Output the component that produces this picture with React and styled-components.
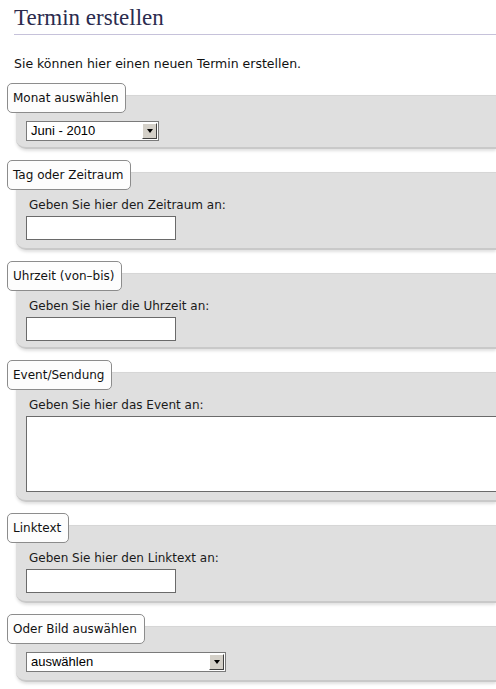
import React from "react";
import styled, { createGlobalStyle } from "styled-components";

const GlobalStyle = createGlobalStyle`
  html, body {
    margin: 0;
    padding: 0;
    background: #fff;
    overflow: hidden;
  }
  body {
    font-family: "DejaVu Sans", Verdana, sans-serif;
    font-size: 12px;
    color: #111;
  }
`;

const Page = styled.div`
  padding: 4px 0 0 7px;
`;

const Title = styled.h1`
  margin: 0 0 0 7px;
  padding: 2px 0 4px;
  font-family: "Liberation Serif", "Times New Roman", serif;
  font-weight: normal;
  font-size: 23px;
  line-height: 24px;
  color: #2b2b4e;
  border-bottom: 1px solid #c6c2da;
`;

const Intro = styled.p`
  margin: 21px 0 12px 7px;
  font-size: 12.5px;
  line-height: 15px;
`;

const Section = styled.section`
  display: flex;
  flex-direction: column;
  align-items: flex-start;
  margin-bottom: 11px;
`;

const Legend = styled.div`
  position: relative;
  z-index: 1;
  height: 28px;
  line-height: 28px;
  padding: 0 7px 0 5px;
  background: #fdfdfd;
  border: 1px solid #8c8c8c;
  border-radius: 5px;
  margin-bottom: -18px;
`;

const Panel = styled.div`
  align-self: stretch;
  overflow: hidden;
  margin-left: 9px;
  padding: 25px 0 ${(p) => (p.$tight ? 6 : 8)}px 10px;
  background: #dfdfdf;
  border-top: 1px solid #d6d6d6;
  border-bottom: 2px solid #c9c9c9;
  border-bottom-left-radius: 10px;
  box-shadow: 0 2px 3px rgba(0, 0, 0, 0.12);
`;

const Label = styled.div`
  padding-left: 3px;
  line-height: 15px;
  margin-bottom: 3px;
  color: #1a1a1a;
`;

const TextBox = styled.div`
  width: ${(p) => (p.$wide ? "calc(100% + 30px)" : "148px")};
  height: ${(p) => p.$height || 22}px;
  background: #fff;
  border: 1px solid #6a6a6a;
`;

const SelectBox = styled.div`
  display: flex;
  align-items: stretch;
  width: ${(p) => p.$width}px;
  height: 18px;
  background: #fff;
  border: 1px solid #7a7a7a;
  font-family: "Liberation Sans", Arial, sans-serif;
  font-size: 13px;
`;

const SelectValue = styled.span`
  flex: 1;
  padding-left: 4px;
  line-height: 18px;
  color: #000;
`;

const ArrowButton = styled.span`
  width: 15px;
  margin: 1px;
  background: #d4d0c8;
  border-top: 1px solid #fff;
  border-left: 1px solid #fff;
  border-right: 1px solid #404040;
  border-bottom: 1px solid #404040;
  box-sizing: border-box;
  display: flex;
  align-items: center;
  justify-content: center;

  &::after {
    content: "";
    border-left: 3.5px solid transparent;
    border-right: 3.5px solid transparent;
    border-top: 4px solid #000;
  }
`;

const Select = ({ value, width }) => (
  <SelectBox $width={width}>
    <SelectValue>{value}</SelectValue>
    <ArrowButton />
  </SelectBox>
);

const Fieldset = ({ legend, tight, children }) => (
  <Section>
    <Legend>{legend}</Legend>
    <Panel $tight={tight}>{children}</Panel>
  </Section>
);

export default function App() {
  return (
    <>
      <GlobalStyle />
      <Page>
        <Title>Termin erstellen</Title>
        <Intro>Sie können hier einen neuen Termin erstellen.</Intro>

        <Fieldset legend="Monat auswählen" tight>
          <Select value="Juni - 2010" width={131} />
        </Fieldset>

        <Fieldset legend="Tag oder Zeitraum">
          <Label>Geben Sie hier den Zeitraum an:</Label>
          <TextBox />
        </Fieldset>

        <Fieldset legend="Uhrzeit (von–bis)" tight>
          <Label>Geben Sie hier die Uhrzeit an:</Label>
          <TextBox />
        </Fieldset>

        <Fieldset legend="Event/Sendung">
          <Label>Geben Sie hier das Event an:</Label>
          <TextBox $wide $height={74} />
        </Fieldset>

        <Fieldset legend="Linktext">
          <Label>Geben Sie hier den Linktext an:</Label>
          <TextBox />
        </Fieldset>

        <Fieldset legend="Oder Bild auswählen">
          <Select value="auswählen" width={198} />
        </Fieldset>
      </Page>
    </>
  );
}
